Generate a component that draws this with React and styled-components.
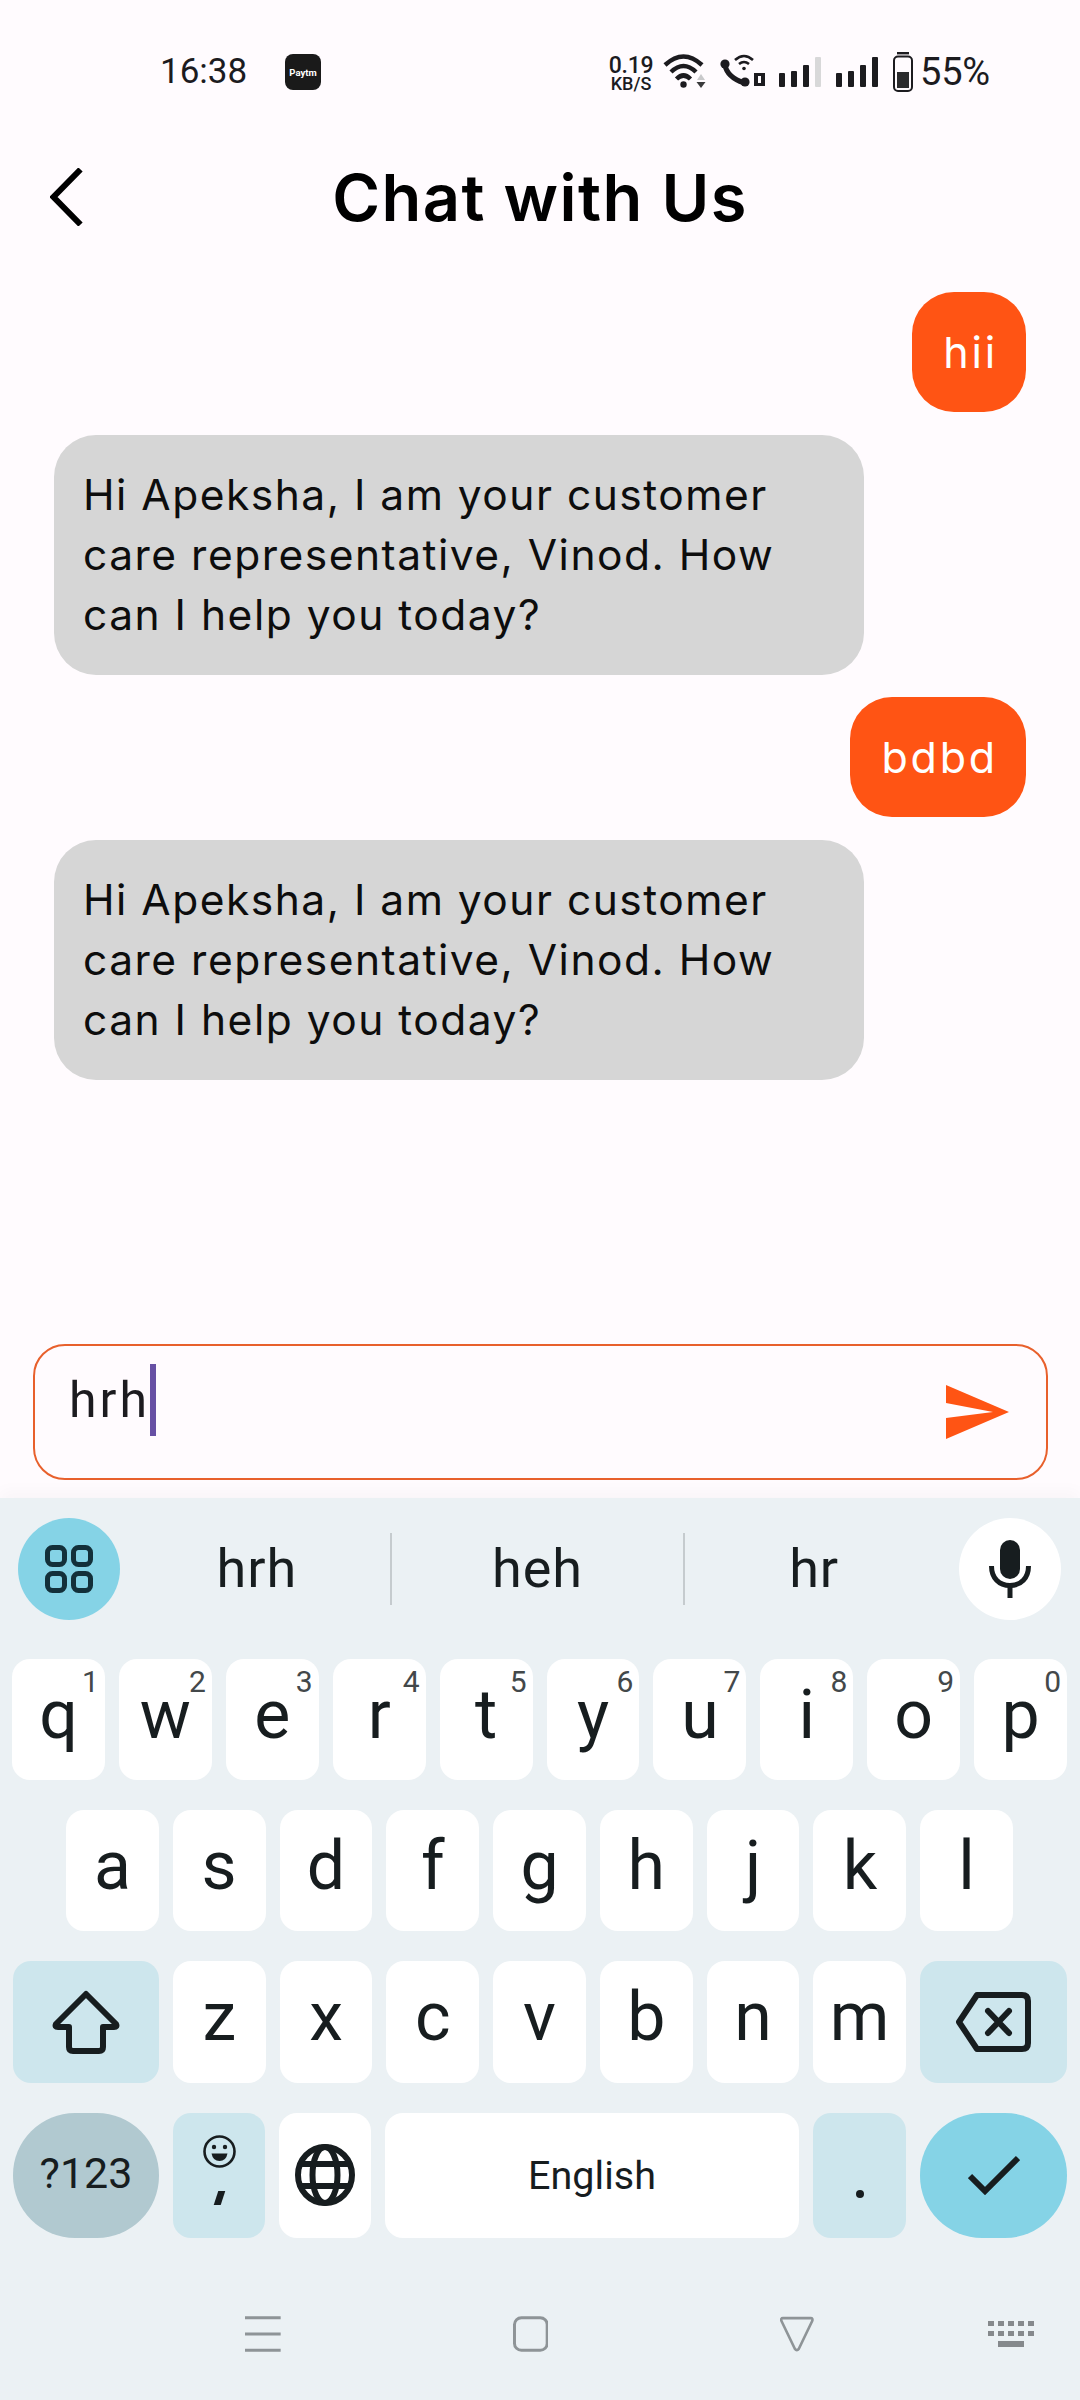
import React from "react";
import styled, { createGlobalStyle } from "styled-components";

const GlobalStyle = createGlobalStyle`
  html, body {
    margin: 0;
    padding: 0;
    background: #fffbfe;
  }
  * {
    box-sizing: border-box;
  }
`;

const Page = styled.div`
  width: 1080px;
  height: 2400px;
  display: flex;
  flex-direction: column;
  background: #fffbfe;
  font-family: Roboto, sans-serif;
  color: #171d1f;
  overflow: hidden;
`;

const StatusBar = styled.div`
  height: 132px;
  padding: 0 90px 0 160px;
  display: flex;
  justify-content: space-between;
  align-items: flex-start;
  color: #1c1b1f;
`;
const StatusLeft = styled.div`
  display: flex;
  align-items: center;
  height: 40px;
  margin-top: 52px;
  gap: 37px;
`;
const StatusRight = styled.div`
  display: flex;
  align-items: flex-start;
  gap: 13px;
  margin-top: 52px;
`;
const Time = styled.span`
  font-size: 35px;
  line-height: 40px;
  width: 88px;
  white-space: nowrap;
`;
const PaytmBadge = styled.div`
  width: 36px;
  height: 36px;
  border-radius: 8px;
  background: #1a1a1a;
  color: #fff;
  font-size: 9.5px;
  font-weight: 700;
  display: flex;
  align-items: center;
  justify-content: center;
`;
const Speed = styled.div`
  width: 44px;
  margin: 4px -3px 0 0;
  display: flex;
  flex-direction: column;
  align-items: center;
  font-weight: 500;
`;
const SpeedValue = styled.span`
  font-size: 23px;
  line-height: 20px;
  letter-spacing: -0.2px;
`;
const SpeedUnit = styled.span`
  font-size: 18px;
  line-height: 16px;
  white-space: nowrap;
`;
const Battery = styled.span`
  font-size: 38px;
  line-height: 40px;
  margin-left: -6px;
  letter-spacing: -0.2px;
`;

const Header = styled.div`
  height: 130px;
  padding-left: 50px;
  display: flex;
  align-items: center;
  position: relative;
`;
const Title = styled.h1`
  flex: 1;
  margin: 0 83px 0 0;
  text-align: center;
  font-family: Inter, sans-serif;
  font-size: 65px;
  font-weight: 600;
  letter-spacing: 1.4px;
  color: #000;
`;

const Messages = styled.div`
  flex: 1;
  padding: 30px 54px 0;
  display: flex;
  flex-direction: column;
  gap: 22.5px;
`;
const Bubble = styled.div`
  align-self: flex-start;
  width: 810px;
  padding: 30px 29px;
  border-radius: 42px;
  background: #d6d6d6;
  color: #0d0d0d;
  font-family: Inter, sans-serif;
  font-size: 42.5px;
  line-height: 60px;
  letter-spacing: 1.5px;
`;
const MineBubble = styled(Bubble)`
  align-self: flex-end;
  width: auto;
  padding: 30px 28px 30px 31px;
  background: #ff5414;
  color: #fff;
  font-size: 43px;
  letter-spacing: 2.8px;
`;

const Composer = styled.div`
  height: 136px;
  margin: 0 32px 18px 33px;
  padding: 18px 36px 0 34px;
  border: 2px solid #e8602c;
  border-radius: 32px;
  display: flex;
  align-items: flex-start;
  position: relative;
`;
const ComposerText = styled.span`
  font-size: 50px;
  line-height: 72px;
  letter-spacing: 3px;
  color: #1c1b1f;
`;
const Caret = styled.span`
  width: 6px;
  height: 72px;
  margin-left: 0;
  background: #6750a4;
`;
const SendButton = styled.div`
  margin-left: auto;
  margin-top: 21px;
  margin-right: 1px;
  display: flex;
`;

const Keyboard = styled.div`
  height: 902px;
  padding-top: 20px;
  background: #ebf1f4;
  box-shadow: 0 -8px 14px rgba(60, 20, 40, 0.025);
  display: flex;
  flex-direction: column;
`;
const SuggestRow = styled.div`
  height: 102px;
  padding: 0 19px 0 18px;
  margin-bottom: 39px;
  display: flex;
  align-items: center;
`;
const RoundButton = styled.div`
  width: 102px;
  height: 102px;
  flex: none;
  border-radius: 50%;
  background: ${({ $bg }) => $bg};
  display: flex;
  align-items: center;
  justify-content: center;
`;
const Suggestion = styled.div`
  width: ${({ $w }) => $w}px;
  padding: 0 ${({ $right }) => $right || 0}px 0 ${({ $left }) => $left || 0}px;
  font-size: 54px;
  line-height: 72px;
  letter-spacing: 1px;
  text-align: center;
  border-right: ${({ $divider }) => ($divider ? "2px solid #c5cbce" : "none")};
`;

const Rows = styled.div`
  display: flex;
  flex-direction: column;
  gap: 30px;
`;
const KeyRow = styled.div`
  height: ${({ $h }) => $h}px;
  padding: 0 ${({ $right }) => $right}px 0 ${({ $left }) => $left}px;
  display: flex;
  gap: 14px;
`;
const Key = styled.div`
  flex: ${({ $w }) => ($w ? `0 0 ${$w}px` : "1")};
  border-radius: ${({ $pill }) => ($pill ? "62px" : "18px")};
  background: ${({ $bg }) => $bg || "#fff"};
  display: flex;
  align-items: center;
  justify-content: center;
  position: relative;
  font-size: ${({ $size }) => $size || 68}px;
  line-height: 1;
  padding-bottom: ${({ $lift }) => $lift ?? 10}px;
`;
const Digit = styled.span`
  position: absolute;
  top: 7px;
  right: 6px;
  font-size: 30px;
  line-height: 32px;
  color: #43484a;
`;
const EmojiStack = styled.div`
  display: flex;
  flex-direction: column;
  align-items: center;
  gap: 23px;
`;
const Comma = styled.span`
  width: 7px;
  height: 14px;
  background: #171d1f;
  transform: skewX(-18deg);
`;
const PeriodDot = styled.span`
  width: 8px;
  height: 8px;
  margin-top: 40px;
  border-radius: 50%;
  background: #171d1f;
`;

const NavBar = styled.div`
  padding: 78px 46px 0 245px;
  display: flex;
  align-items: flex-start;
  gap: 232px;
`;
const NavKeyboard = styled.div`
  margin-left: -58px;
  margin-top: 5px;
  display: flex;
`;

const InkStroke = "#171d1f";

const BackIcon = () => (
  <svg width="33" height="58" viewBox="0 0 33 58">
    <path d="M30.5 1.5 L3.5 29 L30.5 56.5" fill="none" stroke="#000" strokeWidth="6" />
  </svg>
);

const WifiIcon = () => (
  <svg width="44" height="38" viewBox="0 0 44 38">
    <path d="M2 13 Q20.5 -4 39 13" fill="none" stroke="#1c1b1f" strokeWidth="4.5" />
    <path d="M8 20 Q20.5 8 33 20" fill="none" stroke="#1c1b1f" strokeWidth="4.5" />
    <path d="M13.5 27 Q20.5 20 27.5 27" fill="none" stroke="#1c1b1f" strokeWidth="4.5" />
    <circle cx="20.5" cy="32.5" r="3.2" fill="#1c1b1f" />
    <path d="M34 28 L38 22 L42 28 Z" fill="#c9c9cb" />
    <path d="M33.5 30 L42.5 30 L38 36 Z" fill="#3a3a3c" />
  </svg>
);

const CallIcon = () => (
  <svg width="46" height="38" viewBox="0 0 46 38">
    <path d="M5 13 Q7 25 24 31" fill="none" stroke="#1c1b1f" strokeWidth="5" />
    <circle cx="5" cy="12" r="4.6" fill="#1c1b1f" />
    <circle cx="25" cy="30" r="4.6" fill="#1c1b1f" />
    <path d="M15 8 Q24 0 33 8" fill="none" stroke="#1c1b1f" strokeWidth="2.6" />
    <path d="M19 12 Q24 8 29 12" fill="none" stroke="#1c1b1f" strokeWidth="2.6" />
    <circle cx="24" cy="16.5" r="1.8" fill="#1c1b1f" />
    <path fillRule="evenodd" d="M34 21 H45 V34 H34 Z M38 24 V31 H41 V24 Z" fill="#1c1b1f" />
  </svg>
);

const SignalIcon = ({ weak }) => (
  <svg width="44" height="38" viewBox="0 0 44 38">
    <rect x="0" y="21" width="6" height="14" rx="1" fill="#1c1b1f" />
    <rect x="12" y="19" width="6" height="16" rx="1" fill="#1c1b1f" />
    <rect x="24" y="13" width="6" height="22" rx="1" fill="#1c1b1f" />
    <rect x="36" y="5" width="6" height="30" rx="1" fill={weak ? "#d8d8d9" : "#1c1b1f"} />
  </svg>
);

const BatteryIcon = () => (
  <svg width="20" height="40" viewBox="0 0 20 40">
    <rect x="4" y="0" width="12" height="2.4" fill="#1c1b1f" />
    <rect x="1" y="4.5" width="18" height="34.5" rx="4" fill="none" stroke="#1c1b1f" strokeWidth="2" />
    <rect x="4" y="20" width="12" height="16" fill="#2b2b2d" />
  </svg>
);

const SendIcon = () => (
  <svg width="63" height="54" viewBox="0 0 63 54">
    <path d="M0 0 L63 27 L0 54 L0 33 L47 27 L0 18 Z" fill="#ff5414" />
  </svg>
);

const AppsIcon = () => (
  <svg width="48" height="48" viewBox="0 0 48 48" fill="none" stroke="#13303a" strokeWidth="5">
    <rect x="2.5" y="2.5" width="17" height="17" rx="5" />
    <rect x="28.5" y="2.5" width="17" height="17" rx="5" />
    <rect x="2.5" y="28.5" width="17" height="17" rx="5" />
    <rect x="28.5" y="28.5" width="17" height="17" rx="5" />
  </svg>
);

const MicIcon = () => (
  <svg width="42" height="58" viewBox="0 0 42 58">
    <rect x="11" y="0" width="20" height="39" rx="10" fill={InkStroke} />
    <path d="M2.5 26 C2.5 38 10 45.5 21 45.5 C32 45.5 39.5 38 39.5 26" fill="none" stroke={InkStroke} strokeWidth="5" />
    <rect x="18.5" y="45" width="5" height="13" fill={InkStroke} />
  </svg>
);

const ShiftIcon = () => (
  <svg width="68" height="64" viewBox="0 0 68 64">
    <path
      d="M34 4 L64 34 Q65.5 37 62 37 H51 V57 Q51 61 47 61 H21 Q17 61 17 57 V37 H6 Q2.5 37 4 34 Z"
      fill="none"
      stroke={InkStroke}
      strokeWidth="6"
      strokeLinejoin="round"
    />
  </svg>
);

const BackspaceIcon = () => (
  <svg width="75" height="60" viewBox="0 0 75 60">
    <path
      d="M21 3 H66 Q72 3 72 9 V51 Q72 57 66 57 H21 L3 30 Z"
      fill="none"
      stroke={InkStroke}
      strokeWidth="6"
      strokeLinejoin="round"
    />
    <path d="M32 19 L53 41 M53 19 L32 41" stroke={InkStroke} strokeWidth="6" strokeLinecap="round" />
  </svg>
);

const SmileIcon = () => (
  <svg width="33" height="33" viewBox="0 0 33 33">
    <circle cx="16.5" cy="16.5" r="15" fill="none" stroke={InkStroke} strokeWidth="2.6" />
    <circle cx="11" cy="12" r="2.2" fill={InkStroke} />
    <circle cx="22" cy="12" r="2.2" fill={InkStroke} />
    <path d="M8.5 18.5 H24.5 Q23 26 16.5 26 Q10 26 8.5 18.5 Z" fill={InkStroke} />
  </svg>
);

const GlobeIcon = () => (
  <svg width="60" height="62" viewBox="0 0 60 62" fill="none" stroke={InkStroke} strokeWidth="6">
    <ellipse cx="30" cy="31" rx="27" ry="28" />
    <ellipse cx="30" cy="31" rx="12.5" ry="28" />
    <path d="M4 20 H56 M4 42 H56" />
  </svg>
);

const CheckIcon = () => (
  <svg width="52" height="40" viewBox="0 0 52 40">
    <path d="M2 21 L17 36 L50 3" fill="none" stroke={InkStroke} strokeWidth="6" />
  </svg>
);

const MenuIcon = () => (
  <svg width="36" height="36" viewBox="0 0 36 36">
    <path d="M0 1.5 H36 M0 18 H36 M0 34.5 H36" stroke="#8e9497" strokeWidth="3" />
  </svg>
);

const SquareIcon = () => (
  <svg width="36" height="36" viewBox="0 0 36 36">
    <rect x="1.5" y="1.5" width="33" height="33" rx="7" fill="none" stroke="#8e9497" strokeWidth="3" />
  </svg>
);

const TriangleIcon = () => (
  <svg width="34" height="36" viewBox="0 0 34 36">
    <path
      d="M3 2 H31 Q33.5 2 32.5 5 L19 33 Q17 35.5 15 33 L1.5 5 Q0.5 2 3 2 Z"
      fill="none"
      stroke="#8e9497"
      strokeWidth="2.6"
    />
  </svg>
);

const KeyboardIcon = () => (
  <svg width="46" height="26" viewBox="0 0 46 26" fill="#85898c">
    {[0, 10, 20, 30, 40].map((x) => (
      <React.Fragment key={x}>
        <rect x={x} y="0" width="6" height="5" />
        <rect x={x} y="10" width="6" height="5" />
      </React.Fragment>
    ))}
    <rect x="10" y="20" width="26" height="6" />
  </svg>
);

const greeting =
  "Hi Apeksha, I am your customer care representative, Vinod. How can I help you today?";

const topRow = ["q", "w", "e", "r", "t", "y", "u", "i", "o", "p"];
const digits = ["1", "2", "3", "4", "5", "6", "7", "8", "9", "0"];
const homeRow = ["a", "s", "d", "f", "g", "h", "j", "k", "l"];
const lowerRow = ["z", "x", "c", "v", "b", "n", "m"];

const App = () => {
  return (
    <Page>
      <GlobalStyle />
      <StatusBar>
        <StatusLeft>
          <Time>16:38</Time>
          <PaytmBadge>Paytm</PaytmBadge>
        </StatusLeft>
        <StatusRight>
          <Speed>
            <SpeedValue>0.19</SpeedValue>
            <SpeedUnit>KB/S</SpeedUnit>
          </Speed>
          <WifiIcon />
          <CallIcon />
          <SignalIcon weak />
          <SignalIcon />
          <BatteryIcon />
          <Battery>55%</Battery>
        </StatusRight>
      </StatusBar>

      <Header>
        <BackIcon />
        <Title>Chat with Us</Title>
      </Header>

      <Messages>
        <MineBubble>hii</MineBubble>
        <Bubble>{greeting}</Bubble>
        <MineBubble>bdbd</MineBubble>
        <Bubble>{greeting}</Bubble>
      </Messages>

      <Composer>
        <ComposerText>hrh</ComposerText>
        <Caret />
        <SendButton>
          <SendIcon />
        </SendButton>
      </Composer>

      <Keyboard>
        <SuggestRow>
          <RoundButton $bg="#85d3e6">
            <AppsIcon />
          </RoundButton>
          <Suggestion $w={272} $left={4} $divider>hrh</Suggestion>
          <Suggestion $w={294} $divider>heh</Suggestion>
          <Suggestion $w={274} $right={16}>hr</Suggestion>
          <RoundButton $bg="#fff">
            <MicIcon />
          </RoundButton>
        </SuggestRow>

        <Rows>
          <KeyRow $h={121} $left={12} $right={13}>
            {topRow.map((letter, i) => (
              <Key key={letter}>
                {letter}
                <Digit>{digits[i]}</Digit>
              </Key>
            ))}
          </KeyRow>
          <KeyRow $h={121} $left={66} $right={67}>
            {homeRow.map((letter) => (
              <Key key={letter}>{letter}</Key>
            ))}
          </KeyRow>
          <KeyRow $h={122} $left={13} $right={13}>
            <Key $w={146} $bg="#cde6ed" $lift={1}>
              <ShiftIcon />
            </Key>
            {lowerRow.map((letter) => (
              <Key key={letter}>{letter}</Key>
            ))}
            <Key $w={147} $bg="#cde6ed" $lift={1}>
              <BackspaceIcon />
            </Key>
          </KeyRow>
          <KeyRow $h={125} $left={13} $right={13}>
            <Key $w={146} $bg="#b1c9d0" $pill $size={43} $lift={4}>?123</Key>
            <Key $w={92} $bg="#cde6ed" $lift={12}>
              <EmojiStack>
                <SmileIcon />
                <Comma />
              </EmojiStack>
            </Key>
            <Key $w={92} $lift={1}>
              <GlobeIcon />
            </Key>
            <Key $size={39.5} $lift={0}>English</Key>
            <Key $w={93} $bg="#cde6ed" $lift={4}>
              <PeriodDot />
            </Key>
            <Key $w={147} $bg="#85d3e6" $pill $lift={1}>
              <CheckIcon />
            </Key>
          </KeyRow>
        </Rows>

        <NavBar>
          <MenuIcon />
          <SquareIcon />
          <TriangleIcon />
          <NavKeyboard>
            <KeyboardIcon />
          </NavKeyboard>
        </NavBar>
      </Keyboard>
    </Page>
  );
};

export default App;
